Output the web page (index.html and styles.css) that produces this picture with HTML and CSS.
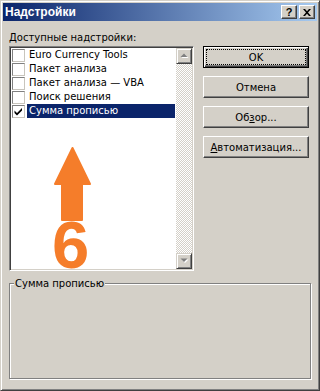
FILE: index.html
```html
<!DOCTYPE html>
<html lang="ru">
<head>
<meta charset="utf-8">
<title>Надстройки</title>
<link rel="stylesheet" href="styles.css">
</head>
<body>
<div class="window">
  <div class="titlebar">
    <span class="title">Надстройки</span>
    <div class="caption-btns">
      <div class="cbtn help">?</div>
      <div class="cbtn close">
        <svg width="8" height="7" viewBox="0 0 8 7"><path d="M0 0h2l2 2.2 2-2.2h2l-3 3.5 3 3.5h-2l-2-2.2-2 2.2h-2l3-3.5z" fill="#000"/></svg>
      </div>
    </div>
  </div>
  <div class="body">
    <div class="top">
      <div class="left">
        <div class="label"><u>Д</u>оступные надстройки:</div>
        <div class="listbox">
          <ul class="items">
            <li class="item"><span class="chk"></span><span class="txt">Euro Currency Tools</span></li>
            <li class="item"><span class="chk"></span><span class="txt">Пакет анализа</span></li>
            <li class="item"><span class="chk"></span><span class="txt">Пакет анализа — VBA</span></li>
            <li class="item"><span class="chk"></span><span class="txt">Поиск решения</span></li>
            <li class="item selected"><span class="chk"><svg width="11" height="11" viewBox="0 0 11 11"><path d="M1.5 4.5l2.5 2.5 5-5v2.5l-5 5-2.5-2.5z" fill="#000"/></svg></span><span class="txt">Сумма прописью</span></li>
          </ul>
          <div class="scrollbar">
            <div class="sbtn"><svg width="9" height="6" viewBox="0 0 9 6"><path d="M1.5 5h7l-3.5-3.5z" fill="#fff"/><path d="M0.5 4h7l-3.5-3.5z" fill="#808080"/></svg></div>
            <div class="track"></div>
            <div class="sbtn"><svg width="9" height="6" viewBox="0 0 9 6"><path d="M1.5 1.5h7l-3.5 3.5z" fill="#fff"/><path d="M0.5 0.5h7l-3.5 3.5z" fill="#808080"/></svg></div>
          </div>
        </div>
      </div>
      <div class="buttons">
        <div class="btn default"><span class="focus">OK</span></div>
        <div class="btn">Отмена</div>
        <div class="btn">Об<u>з</u>ор...</div>
        <div class="btn"><u>А</u>втоматизация...</div>
      </div>
    </div>
    <div class="group">
      <div class="group-label">Сумма прописью</div>
    </div>
  </div>
  <svg class="arrow" width="44" height="82" viewBox="0 0 44 82"><path d="M21.5 5L39 41H31V77H11V41H4Z" fill="#f57d2a" stroke="#f57d2a" stroke-width="2" stroke-linejoin="round"/></svg>
  <div class="six">6</div>
</div>
</body>
</html>
```
FILE: styles.css
```css
body {
  margin: 0;
  background: #d4d0c8;
  font-family: "DejaVu Sans", Verdana, sans-serif;
  font-size: 10px;
  color: #000;
}
.window {
  position: relative;
  width: 320px;
  height: 391px;
  box-sizing: border-box;
  border: 1px solid;
  border-color: #d4d0c8 #404040 #404040 #d4d0c8;
  box-shadow: inset 1px 1px 0 #fff, inset -1px -1px 0 #808080;
  padding: 2px;
  background: #d4d0c8;
  display: flex;
  flex-direction: column;
  overflow: hidden;
}
.titlebar {
  height: 18px;
  flex: none;
  display: flex;
  align-items: center;
  padding: 0 2px;
  background: linear-gradient(to right, #0a246a, #a6caf0);
}
.title {
  flex: 1;
  color: #fff;
  font-family: "Liberation Sans", Arial, sans-serif;
  font-weight: bold;
  font-size: 12px;
  line-height: 18px;
}
.caption-btns {
  display: flex;
  gap: 2px;
}
.cbtn {
  width: 16px;
  height: 14px;
  box-sizing: border-box;
  border: 1px solid;
  border-color: #fff #404040 #404040 #fff;
  box-shadow: inset -1px -1px 0 #808080;
  background: #d4d0c8;
  display: flex;
  align-items: center;
  justify-content: center;
  font-family: "Liberation Sans", Arial, sans-serif;
  font-weight: bold;
  font-size: 11px;
  line-height: 12px;
}
.body {
  padding: 10px 6px 0 6px;
}
.top {
  display: flex;
  gap: 9px;
}
.left {
  width: 185px;
}
.label {
  line-height: 13px;
  height: 13px;
  margin-bottom: 2px;
}
.listbox {
  width: 185px;
  height: 225px;
  box-sizing: border-box;
  border: 1px solid;
  border-color: #808080 #fff #fff #808080;
  box-shadow: inset 1px 1px 0 #404040, inset -1px -1px 0 #d4d0c8;
  padding: 1px;
  background: #fff;
  display: flex;
}
.items {
  flex: 1;
  list-style: none;
  margin: 0;
  padding: 0;
  min-width: 0;
}
.item {
  display: flex;
  align-items: center;
  height: 14px;
}
.chk {
  width: 13px;
  height: 13px;
  box-sizing: border-box;
  flex: none;
  margin-left: 1px;
  margin-right: 2px;
  border: 1px solid;
  border-color: #808080 #c8c5bd #c8c5bd #808080;
  background: #fff;
  display: flex;
  align-items: center;
  justify-content: center;
}
.txt {
  flex: 1;
  line-height: 14px;
  padding-left: 2px;
  margin-right: 1px;
  white-space: nowrap;
}
.selected .txt {
  background: #0a246a;
  color: #fff;
}
.scrollbar {
  width: 16px;
  flex: none;
  display: flex;
  flex-direction: column;
}
.sbtn {
  height: 16px;
  box-sizing: border-box;
  flex: none;
  border: 1px solid;
  border-color: #d4d0c8 #404040 #404040 #d4d0c8;
  box-shadow: inset 1px 1px 0 #fff, inset -1px -1px 0 #808080;
  background: #d4d0c8;
  display: flex;
  align-items: center;
  justify-content: center;
}
.track {
  flex: 1;
  background: repeating-conic-gradient(#d4d0c8 0 25%, #fff 0 50%) 0 0 / 2px 2px;
}
.buttons {
  width: 106px;
  padding-top: 15px;
  display: flex;
  flex-direction: column;
  gap: 8px;
}
.btn {
  height: 22px;
  box-sizing: border-box;
  border: 1px solid;
  border-color: #fff #404040 #404040 #fff;
  box-shadow: inset -1px -1px 0 #808080;
  display: flex;
  align-items: center;
  justify-content: center;
  line-height: 13px;
}
.btn.default {
  border: 1px solid #000;
  box-shadow: inset 1px 1px 0 #fff, inset -1px -1px 0 #404040, inset -2px -2px 0 #808080;
  padding: 2px;
}
.focus {
  flex: 1;
  align-self: stretch;
  border: 1px dotted #000;
  display: flex;
  align-items: center;
  justify-content: center;
}
.group {
  margin-top: 12px;
  height: 96px;
  box-sizing: border-box;
  border: 1px solid #808080;
  box-shadow: inset 1px 1px 0 #fff, 1px 1px 0 #fff;
}
.group-label {
  display: inline-block;
  margin: -7px 0 0 4px;
  padding: 0 1px;
  line-height: 13px;
  background: #d4d0c8;
  vertical-align: top;
}
.arrow {
  position: absolute;
  left: 50px;
  top: 142px;
}
.six {
  position: absolute;
  left: 51px;
  top: 219px;
  font-family: "Liberation Sans", Arial, sans-serif;
  font-weight: bold;
  font-size: 67px;
  line-height: 50px;
  color: #f57d2a;
}
```
